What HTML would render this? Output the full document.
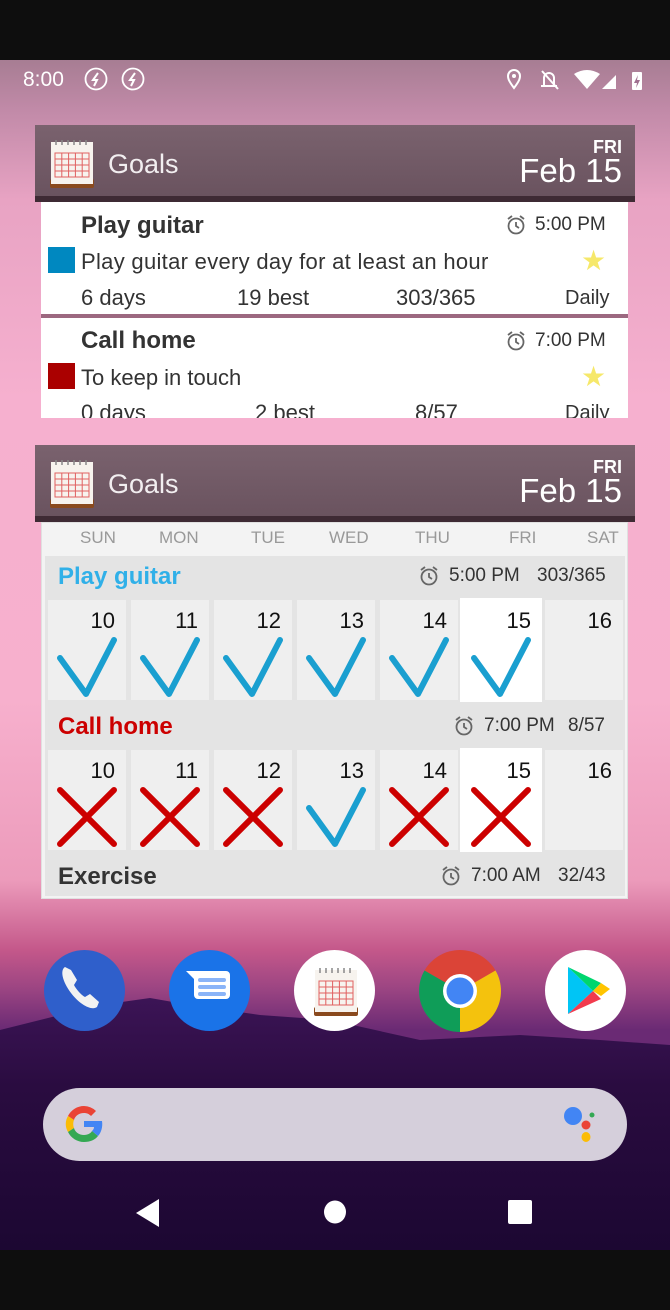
<!DOCTYPE html>
<html><head><meta charset="utf-8"><style>
*{margin:0;padding:0;box-sizing:border-box}
body{width:670px;height:1310px;position:relative;overflow:hidden;font-family:"Liberation Sans",sans-serif;
background:linear-gradient(180deg,#a77d93 60px,#c18aa8 110px,#e8a3c3 200px,#f6b0cf 400px,#f7b0cd 700px,#ec9bbb 880px,#c4588a 950px,#9a4482 990px,#6a2a74 1030px);}
.abs{position:absolute}
.hdr{position:absolute;left:35px;width:600px;height:77px;background:linear-gradient(180deg,#7a626e,#6a535f);border-bottom:6px solid #3e2a34;color:#fff}
.hdr .g{position:absolute;left:73px;top:24px;font-size:27px;color:#f2eef0}
.hdr .fri{position:absolute;right:13px;top:12px;font-size:18px;font-weight:bold}
.hdr .dt{position:absolute;right:13px;top:27px;font-size:33px}
.cal{position:absolute;left:13px;top:14px}
.t{position:absolute;color:#333;white-space:nowrap}
.cell{position:absolute;width:78px;height:100px;background:#efefef}
.cell span{position:absolute;right:11px;top:8px;font-size:22px;color:#111}
.cell svg{position:absolute;left:8px;top:36px}
</style></head><body>
<div class="abs" style="left:0;top:0;width:670px;height:60px;background:#0e0e0e"></div>
<div class="t" style="left:23px;top:68px;font-size:21px;color:#fff">8:00</div>
<svg class="abs" style="left:84px;top:67px" width="62" height="26"><circle cx="12" cy="12" r="10.5" fill="none" stroke="#fff" stroke-width="1.8"/><path d="M14 6l-5 7h4l-3 6" fill="none" stroke="#fff" stroke-width="2"/><circle cx="49" cy="12" r="10.5" fill="none" stroke="#fff" stroke-width="1.8"/><path d="M51 6l-5 7h4l-3 6" fill="none" stroke="#fff" stroke-width="2"/></svg>
<svg class="abs" style="left:504px;top:68px" width="150" height="24"><path d="M10 20C4 12 4 10 4 8a6 6 0 0112 0c0 2 0 4-6 12z" fill="none" stroke="#fff" stroke-width="2"/><circle cx="10" cy="8" r="2" fill="#fff"/><path d="M40 18V10a5 5 0 0110 0v8h3H37zM38 3l16 18" fill="none" stroke="#fff" stroke-width="2"/><path d="M70 6q13-8 26 0l-13 15z" fill="#fff"/><path d="M98 21L112 7v14z" fill="#fff"/><path d="M105 21l7-7v7z" fill="#fff"/><rect x="128" y="4" width="10" height="18" rx="1" fill="#fff"/><path d="M134 7l-4 8h3l-1 5 4-8h-3z" fill="#a07090"/></svg>

<div class="hdr" style="top:125px">
<svg class="cal" width="48" height="50" viewBox="0 0 48 50"><rect x="2" y="40" width="44" height="9" rx="2" fill="#8a4a1e"/><rect x="3" y="3" width="42" height="42" fill="#f7f3ee"/><g stroke="#e06060" stroke-width="1" fill="none"><rect x="7" y="14" width="34" height="24"/><path d="M7 20h34M7 26h34M7 32h34M13.8 14v24M20.6 14v24M27.4 14v24M34.2 14v24"/></g><path d="M8 1v5M14 1v5M20 1v5M26 1v5M32 1v5M38 1v5" stroke="#888" stroke-width="1.5"/></svg>
<div class="g">Goals</div><div class="fri">FRI</div><div class="dt">Feb 15</div></div>
<div class="abs" style="left:41px;top:202px;width:587px;height:216px;background:#fff;overflow:hidden">
<div class="t" style="left:40px;top:10px;font-size:24px;font-weight:bold">Play guitar</div>
<svg class="abs" style="left:464px;top:12px" width="22" height="22"><circle cx="11" cy="12" r="7.5" fill="none" stroke="#666" stroke-width="1.8"/><path d="M11 8v4l3 2M3 5l4-3M19 5l-4-3" stroke="#666" stroke-width="1.8" fill="none"/></svg>
<div class="t" style="left:494px;top:12px;font-size:19px">5:00 PM</div>
<div class="abs" style="left:7px;top:45px;width:27px;height:26px;background:#0088c0"></div>
<div class="t" style="left:40px;top:47px;font-size:22px;letter-spacing:0.3px">Play guitar every day for at least an hour</div>
<div class="t" style="left:540px;top:42px;font-size:28px;color:#f6e86a">★</div>
<div class="t" style="left:40px;top:83px;font-size:22px">6 days</div>
<div class="t" style="left:196px;top:83px;font-size:22px">19 best</div>
<div class="t" style="left:355px;top:83px;font-size:22px">303/365</div>
<div class="t" style="left:524px;top:85px;font-size:20px">Daily</div>
<div class="abs" style="left:0;top:112px;width:587px;height:4px;background:#9c6880"></div>
<div class="t" style="left:40px;top:125px;font-size:24px;font-weight:bold">Call home</div>
<svg class="abs" style="left:464px;top:128px" width="22" height="22"><circle cx="11" cy="12" r="7.5" fill="none" stroke="#666" stroke-width="1.8"/><path d="M11 8v4l3 2M3 5l4-3M19 5l-4-3" stroke="#666" stroke-width="1.8" fill="none"/></svg>
<div class="t" style="left:494px;top:128px;font-size:19px">7:00 PM</div>
<div class="abs" style="left:7px;top:161px;width:27px;height:26px;background:#aa0000"></div>
<div class="t" style="left:40px;top:163px;font-size:22px">To keep in touch</div>
<div class="t" style="left:540px;top:158px;font-size:28px;color:#f6e86a">★</div>
<div class="t" style="left:40px;top:198px;font-size:22px">0 days</div>
<div class="t" style="left:214px;top:198px;font-size:22px">2 best</div>
<div class="t" style="left:374px;top:198px;font-size:22px">8/57</div>
<div class="t" style="left:524px;top:200px;font-size:20px">Daily</div>
</div>

<div class="hdr" style="top:445px">
<svg class="cal" width="48" height="50" viewBox="0 0 48 50"><rect x="2" y="40" width="44" height="9" rx="2" fill="#8a4a1e"/><rect x="3" y="3" width="42" height="42" fill="#f7f3ee"/><g stroke="#e06060" stroke-width="1" fill="none"><rect x="7" y="14" width="34" height="24"/><path d="M7 20h34M7 26h34M7 32h34M13.8 14v24M20.6 14v24M27.4 14v24M34.2 14v24"/></g><path d="M8 1v5M14 1v5M20 1v5M26 1v5M32 1v5M38 1v5" stroke="#888" stroke-width="1.5"/></svg>
<div class="g">Goals</div><div class="fri">FRI</div><div class="dt">Feb 15</div></div>
<div class="abs" style="left:41px;top:522px;width:587px;height:377px;background:#f3f3f3;border:1px solid #e0e0e0">
<div class="t" style="left:38px;top:5px;font-size:17px;color:#999">SUN</div>
<div class="t" style="left:117px;top:5px;font-size:17px;color:#999">MON</div>
<div class="t" style="left:209px;top:5px;font-size:17px;color:#999">TUE</div>
<div class="t" style="left:287px;top:5px;font-size:17px;color:#999">WED</div>
<div class="t" style="left:373px;top:5px;font-size:17px;color:#999">THU</div>
<div class="t" style="left:467px;top:5px;font-size:17px;color:#999">FRI</div>
<div class="t" style="left:545px;top:5px;font-size:17px;color:#999">SAT</div>
<div class="abs" style="left:3px;top:33px;width:580px;height:340px;background:#e4e4e4"></div>
<div class="t" style="left:16px;top:40px;font-size:24px;font-weight:bold;color:#30b0e8">Play guitar</div>
<svg class="abs" style="left:376px;top:42px" width="22" height="22"><circle cx="11" cy="12" r="7.5" fill="none" stroke="#666" stroke-width="1.8"/><path d="M11 8v4l3 2M3 5l4-3M19 5l-4-3" stroke="#666" stroke-width="1.8" fill="none"/></svg>
<div class="t" style="left:407px;top:42px;font-size:19px">5:00 PM</div>
<div class="t" style="left:495px;top:42px;font-size:19px">303/365</div>
<div class="t" style="left:16px;top:190px;font-size:24px;font-weight:bold;color:#cc0000">Call home</div>
<svg class="abs" style="left:411px;top:192px" width="22" height="22"><circle cx="11" cy="12" r="7.5" fill="none" stroke="#666" stroke-width="1.8"/><path d="M11 8v4l3 2M3 5l4-3M19 5l-4-3" stroke="#666" stroke-width="1.8" fill="none"/></svg>
<div class="t" style="left:442px;top:192px;font-size:19px">7:00 PM</div>
<div class="t" style="left:526px;top:192px;font-size:19px">8/57</div>
<div class="t" style="left:16px;top:340px;font-size:24px;font-weight:bold">Exercise</div>
<svg class="abs" style="left:398px;top:342px" width="22" height="22"><circle cx="11" cy="12" r="7.5" fill="none" stroke="#666" stroke-width="1.8"/><path d="M11 8v4l3 2M3 5l4-3M19 5l-4-3" stroke="#666" stroke-width="1.8" fill="none"/></svg>
<div class="t" style="left:429px;top:342px;font-size:19px">7:00 AM</div>
<div class="t" style="left:516px;top:342px;font-size:19px">32/43</div>
</div>
<div class="cell" style="left:48px;top:600px"><span>10</span><svg width="64" height="62"><path d="M4 22l26 36L58 4" fill="none" stroke="#1a9fd0" stroke-width="6" stroke-linecap="round" stroke-linejoin="round"/></svg></div>
<div class="cell" style="left:131px;top:600px"><span>11</span><svg width="64" height="62"><path d="M4 22l26 36L58 4" fill="none" stroke="#1a9fd0" stroke-width="6" stroke-linecap="round" stroke-linejoin="round"/></svg></div>
<div class="cell" style="left:214px;top:600px"><span>12</span><svg width="64" height="62"><path d="M4 22l26 36L58 4" fill="none" stroke="#1a9fd0" stroke-width="6" stroke-linecap="round" stroke-linejoin="round"/></svg></div>
<div class="cell" style="left:297px;top:600px"><span>13</span><svg width="64" height="62"><path d="M4 22l26 36L58 4" fill="none" stroke="#1a9fd0" stroke-width="6" stroke-linecap="round" stroke-linejoin="round"/></svg></div>
<div class="cell" style="left:380px;top:600px"><span>14</span><svg width="64" height="62"><path d="M4 22l26 36L58 4" fill="none" stroke="#1a9fd0" stroke-width="6" stroke-linecap="round" stroke-linejoin="round"/></svg></div>
<div class="cell" style="left:460px;top:598px;width:82px;height:104px;background:#fff"><span style="top:10px">15</span><svg width="64" height="62" style="top:38px;left:10px"><path d="M4 22l26 36L58 4" fill="none" stroke="#1a9fd0" stroke-width="6" stroke-linecap="round" stroke-linejoin="round"/></svg></div>
<div class="cell" style="left:545px;top:600px"><span>16</span></div>
<div class="cell" style="left:48px;top:750px"><span>10</span><svg width="64" height="62"><path d="M4 4l54 54M58 4L4 58" stroke="#cc0000" stroke-width="6" stroke-linecap="round"/></svg></div>
<div class="cell" style="left:131px;top:750px"><span>11</span><svg width="64" height="62"><path d="M4 4l54 54M58 4L4 58" stroke="#cc0000" stroke-width="6" stroke-linecap="round"/></svg></div>
<div class="cell" style="left:214px;top:750px"><span>12</span><svg width="64" height="62"><path d="M4 4l54 54M58 4L4 58" stroke="#cc0000" stroke-width="6" stroke-linecap="round"/></svg></div>
<div class="cell" style="left:297px;top:750px"><span>13</span><svg width="64" height="62"><path d="M4 22l26 36L58 4" fill="none" stroke="#1a9fd0" stroke-width="6" stroke-linecap="round" stroke-linejoin="round"/></svg></div>
<div class="cell" style="left:380px;top:750px"><span>14</span><svg width="64" height="62"><path d="M4 4l54 54M58 4L4 58" stroke="#cc0000" stroke-width="6" stroke-linecap="round"/></svg></div>
<div class="cell" style="left:460px;top:748px;width:82px;height:104px;background:#fff"><span style="top:10px">15</span><svg width="64" height="62" style="top:38px;left:10px"><path d="M4 4l54 54M58 4L4 58" stroke="#cc0000" stroke-width="6" stroke-linecap="round"/></svg></div>
<div class="cell" style="left:545px;top:750px"><span>16</span></div>

<svg class="abs" style="left:0;top:990px" width="670" height="260"><defs><linearGradient id="m" x1="0" y1="0" x2="0" y2="1"><stop offset="0" stop-color="#3c1456"/><stop offset="0.35" stop-color="#2a0c40"/><stop offset="1" stop-color="#1c0732"/></linearGradient></defs><path d="M0 40L60 25 100 15 150 8 190 15 260 25 330 30 420 50 520 45 600 50 670 55V260H0z" fill="url(#m)"/></svg>
<div class="abs" style="left:44px;top:950px;width:81px;height:81px;border-radius:50%;background:#2f5fcb"></div>
<svg class="abs" style="left:59px;top:965px" width="50" height="50"><path d="M6 2c-5 3-3 14 6 26s21 18 26 14l2-5-9-8-5 3c-4-2-9-8-11-12l3-5-6-10z" fill="#f2f2f2"/></svg>
<div class="abs" style="left:169px;top:950px;width:81px;height:81px;border-radius:50%;background:#1a73e8"></div>
<svg class="abs" style="left:184px;top:965px" width="50" height="50"><path d="M2 6h40a4 4 0 014 4v20a4 4 0 01-4 4H14a4 4 0 01-4-4V14z" fill="#fff"/><path d="M16 15h24M16 22h24M16 29h24" stroke="#8ab4f8" stroke-width="4" stroke-linecap="round"/></svg>
<div class="abs" style="left:294px;top:950px;width:81px;height:81px;border-radius:50%;background:#fff"></div>
<svg class="abs" style="left:312px;top:967px" width="48" height="50" viewBox="0 0 48 50"><rect x="2" y="40" width="44" height="9" rx="2" fill="#8a4a1e"/><rect x="3" y="3" width="42" height="42" fill="#f7f3ee"/><g stroke="#e06060" stroke-width="1" fill="none"><rect x="7" y="14" width="34" height="24"/><path d="M7 20h34M7 26h34M7 32h34M13.8 14v24M20.6 14v24M27.4 14v24M34.2 14v24"/></g><path d="M8 1v5M14 1v5M20 1v5M26 1v5M32 1v5M38 1v5" stroke="#888" stroke-width="1.5"/></svg>
<svg class="abs" style="left:419px;top:950px" width="82" height="82" viewBox="-41 -41 82 82"><path d="M0 0L-35.5 -20.5A41 41 0 0 1 35.5 -20.5z" fill="#db4437"/><path d="M0 0L35.5 -20.5A41 41 0 0 1 0 41z" fill="#f4c20d"/><path d="M0 0L0 41A41 41 0 0 1 -35.5 -20.5z" fill="#0f9d58"/><circle r="17" fill="#fff"/><circle r="13.5" fill="#4285f4"/></svg>
<div class="abs" style="left:545px;top:950px;width:81px;height:81px;border-radius:50%;background:#fff"></div>
<svg class="abs" style="left:565px;top:965px" width="50" height="50"><path d="M3 2l25 24L3 49z" fill="#00c5f5"/><path d="M3 2l25 24 8-8z" fill="#00d66e"/><path d="M3 49l25-23 8 8z" fill="#f23b4e"/><path d="M36 18l9 6-9 7-8-5z" fill="#ffc400"/></svg>
<div class="abs" style="left:43px;top:1088px;width:584px;height:73px;border-radius:37px;background:#d5cfdb"></div>
<svg class="abs" style="left:64px;top:1104px" width="40" height="40" viewBox="0 0 40 40"><path d="M20 2a18 18 0 0112 5l-5 5c-2-2-4-3-7-3-5 0-9 3-10 7L4 12A18 18 0 0120 2z" fill="#ea4335"/><path d="M4 12l6 4c-1 2-1 6 0 8l-6 4c-3-5-3-11 0-16z" fill="#fbbc05"/><path d="M4 28l6-4c1 4 5 7 10 7 4 0 7-2 8-4l6 5c-3 4-8 6-14 6-7 0-13-4-16-10z" fill="#34a853"/><path d="M38 17c1 6-1 12-4 15l-6-5c1-1 2-2 2-4h-10v-6h18z" fill="#4285f4"/></svg>
<svg class="abs" style="left:560px;top:1105px" width="42" height="38"><circle cx="13" cy="11" r="9" fill="#4285f4"/><circle cx="26" cy="20" r="4.5" fill="#ea4335"/><circle cx="32" cy="10" r="2.5" fill="#34a853"/><ellipse cx="26" cy="32" rx="4.5" ry="5" fill="#fbbc05"/></svg>
<svg class="abs" style="left:130px;top:1195px" width="410" height="34"><path d="M29 4v28L6 18z" fill="#fff"/><ellipse cx="205" cy="17" rx="11" ry="11.5" fill="#fff"/><rect x="378" y="5" width="24" height="24" rx="2" fill="#fff"/></svg>
<div class="abs" style="left:0;top:1250px;width:670px;height:60px;background:#0e0e0e"></div>
</body></html>
